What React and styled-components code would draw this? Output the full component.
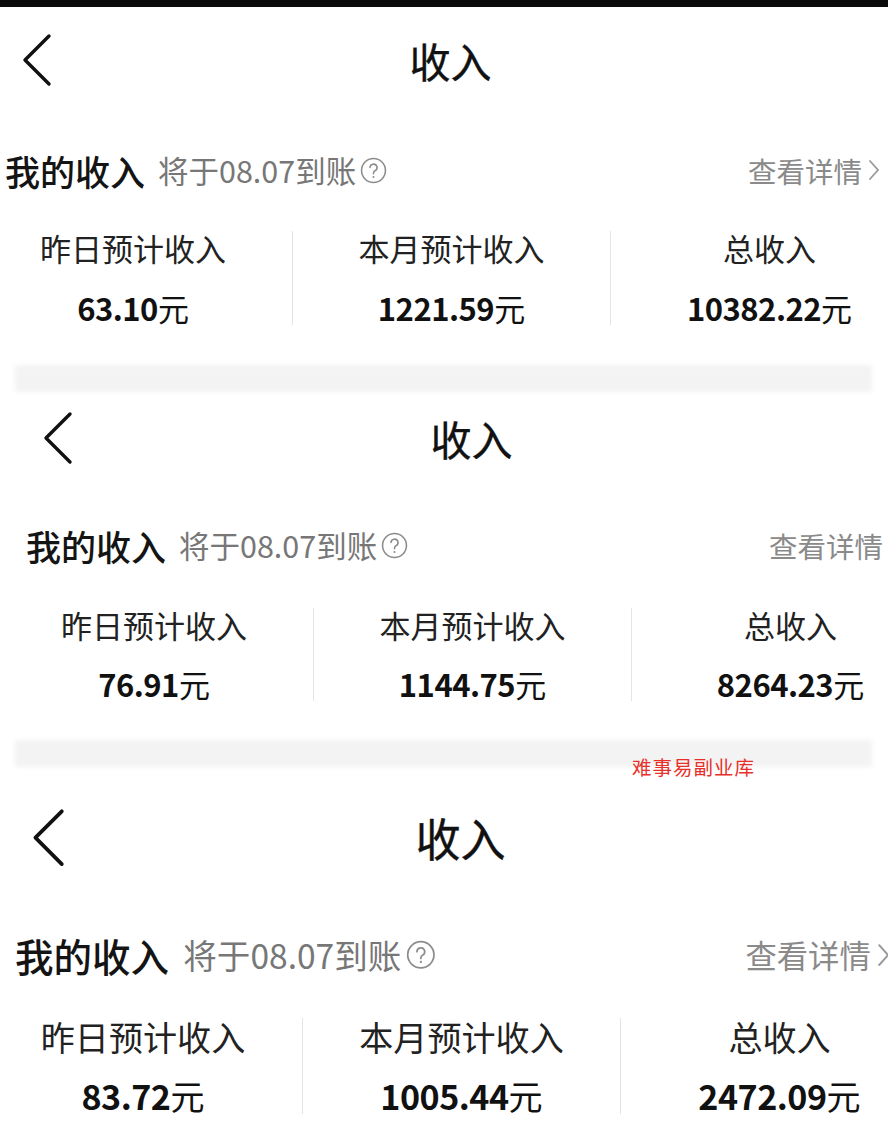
import React from "react";
import styled, {createGlobalStyle} from "styled-components";

const GlobalStyle = createGlobalStyle`
	html, body {
		margin: 0;
		padding: 0;
		background: #fff;
		overflow: hidden;
	}
	body {
		font-family: "Noto Sans CJK SC", "Noto Sans", sans-serif;
		color: #161616;
	}
`;

const Page = styled.div`
	width: 888px;
	height: 1123px;
	overflow: hidden;
	position: relative;
	background: #fff;
`;

const TopBar = styled.div`
	height: 7px;
	background: #0a0a0a;
`;

const PanelBox = styled.section`
	width: 888px;
	margin-left: ${(p) => p.$shift}px;
	padding-bottom: ${(p) => p.$bottom}px;
`;

const Nav = styled.div`
	height: ${(p) => p.$h}px;
	display: grid;
	grid-template-columns: 1fr auto 1fr;
	align-items: center;
	padding-left: 21px;
	padding-right: 8px;
`;

const Title = styled.h1`
	margin: 0;
	font-size: ${(p) => 41 * p.$s}px;
	font-weight: 400;
	line-height: 1;
	color: #111;
	-webkit-text-stroke: 0.4px #111;
`;

const Header = styled.div`
	width: 880px;
	height: ${(p) => 56 * p.$s}px;
	margin-top: ${(p) => p.$top}px;
	display: flex;
	align-items: center;
	justify-content: space-between;
	padding-left: 5px;
	box-sizing: border-box;
`;

const HeaderLeft = styled.div`
	display: flex;
	align-items: center;
`;

const MyIncome = styled.span`
	font-size: ${(p) => 35 * p.$s}px;
	font-weight: 500;
	color: #141414;
`;

const Settle = styled.span`
	margin-left: ${(p) => 13 * p.$s}px;
	font-size: ${(p) => 30.5 * p.$s}px;
	color: #777;
`;

const DetailLink = styled.div`
	display: flex;
	align-items: center;
	gap: 6px;
	font-size: ${(p) => 28.5 * p.$s}px;
	color: #8a8a8a;
	white-space: nowrap;
`;

const Stats = styled.div`
	display: grid;
	grid-template-columns: repeat(3, 318px);
	margin-left: -26px;
	margin-top: ${(p) => p.$top}px;
`;

const StatCol = styled.div`
	display: flex;
	flex-direction: column;
	align-items: center;
	gap: ${(p) => p.$gap}px;
	border-left: ${(p) => (p.$first ? "none" : "1px solid #e4e4e4")};
`;

const StatLabel = styled.div`
	font-size: ${(p) => 31 * p.$s}px;
	line-height: ${(p) => 34 * p.$s}px;
	color: #222;
`;

const StatValue = styled.div`
	font-size: ${(p) => 31 * p.$s}px;
	line-height: ${(p) => 34 * p.$s}px;
	color: #111;
	b {
		font-weight: 700;
		letter-spacing: -0.5px;
	}
	span {
		font-weight: 400;
	}
`;

const Band = styled.div`
	position: relative;
	height: 27px;
	margin: 0 16px 0 15px;
	&::before {
		content: "";
		position: absolute;
		inset: 0;
		background: #f3f3f3;
		filter: blur(2px);
	}
`;

const Watermark = styled.div`
	position: absolute;
	left: 617px;
	top: 12px;
	font-family: "Liberation Serif", "Noto Sans CJK SC", serif;
	font-size: 19.5px;
	letter-spacing: 1px;
	color: #e8302a;
	white-space: nowrap;
`;

const BackIcon = ({s}) => (
	<svg width={32 * s} height={54 * s} viewBox="0 0 32 54">
		<polyline
			points="28,3 4,27 28,51"
			fill="none"
			stroke="#111"
			strokeWidth="3.4"
			strokeLinecap="round"
			strokeLinejoin="round"
		/>
	</svg>
);

const HelpIcon = ({s}) => (
	<svg
		width={27 * s}
		height={27 * s}
		viewBox="0 0 26 26"
		style={{marginLeft: 4 * s}}
	>
		<circle cx="13" cy="13" r="11.5" fill="none" stroke="#8c8c8c" strokeWidth="1.5" />
		<path
			d="M9.6 10.2a3.4 3.4 0 1 1 4.9 3.1c-1 .5-1.5 1.1-1.5 2.3v.6"
			fill="none"
			stroke="#8c8c8c"
			strokeWidth="1.5"
			strokeLinecap="round"
		/>
		<circle cx="13" cy="19.2" r="1" fill="#8c8c8c" />
	</svg>
);

const RightIcon = ({s}) => (
	<svg width={12 * s} height={22 * s} viewBox="0 0 12 22">
		<polyline
			points="2,2 10,11 2,20"
			fill="none"
			stroke="#9a9a9a"
			strokeWidth="1.8"
			strokeLinecap="round"
		/>
	</svg>
);

const Panel = ({cfg}) => {
	const s = cfg.s;
	return (
		<PanelBox $shift={cfg.shift} $bottom={cfg.bottom}>
			<Nav $h={cfg.nav}>
				<BackIcon s={s} />
				<Title $s={s}>收入</Title>
				<div />
			</Nav>
			<Header $s={s} $top={cfg.head}>
				<HeaderLeft>
					<MyIncome $s={s}>我的收入</MyIncome>
					<Settle $s={s}>将于08.07到账</Settle>
					<HelpIcon s={s} />
				</HeaderLeft>
				<DetailLink $s={s}>
					查看详情
					<RightIcon s={s} />
				</DetailLink>
			</Header>
			<Stats $top={cfg.stats}>
				{cfg.data.map((d, i) => (
					<StatCol key={d.label} $first={i === 0} $gap={cfg.gap}>
						<StatLabel $s={s}>{d.label}</StatLabel>
						<StatValue $s={s}>
							<b>{d.value}</b>
							<span>元</span>
						</StatValue>
					</StatCol>
				))}
			</Stats>
		</PanelBox>
	);
};

const panels = [
	{
		shift: 0, s: 1, nav: 106, head: 29, stats: 33, gap: 26, bottom: 40,
		data: [
			{label: "昨日预计收入", value: "63.10"},
			{label: "本月预计收入", value: "1221.59"},
			{label: "总收入", value: "10382.22"},
		],
	},
	{
		shift: 21, s: 1, nav: 92, head: 33, stats: 35, gap: 25, bottom: 39,
		data: [
			{label: "昨日预计收入", value: "76.91"},
			{label: "本月预计收入", value: "1144.75"},
			{label: "总收入", value: "8264.23"},
		],
	},
	{
		shift: 10, s: 1.1, nav: 142, head: 15, stats: 32, gap: 22, bottom: 0,
		data: [
			{label: "昨日预计收入", value: "83.72"},
			{label: "本月预计收入", value: "1005.44"},
			{label: "总收入", value: "2472.09"},
		],
	},
];

export default function App() {
	return (
		<Page>
			<GlobalStyle />
			<TopBar />
			<Panel cfg={panels[0]} />
			<Band />
			<Panel cfg={panels[1]} />
			<Band>
				<Watermark>难事易副业库</Watermark>
			</Band>
			<Panel cfg={panels[2]} />
		</Page>
	);
}
